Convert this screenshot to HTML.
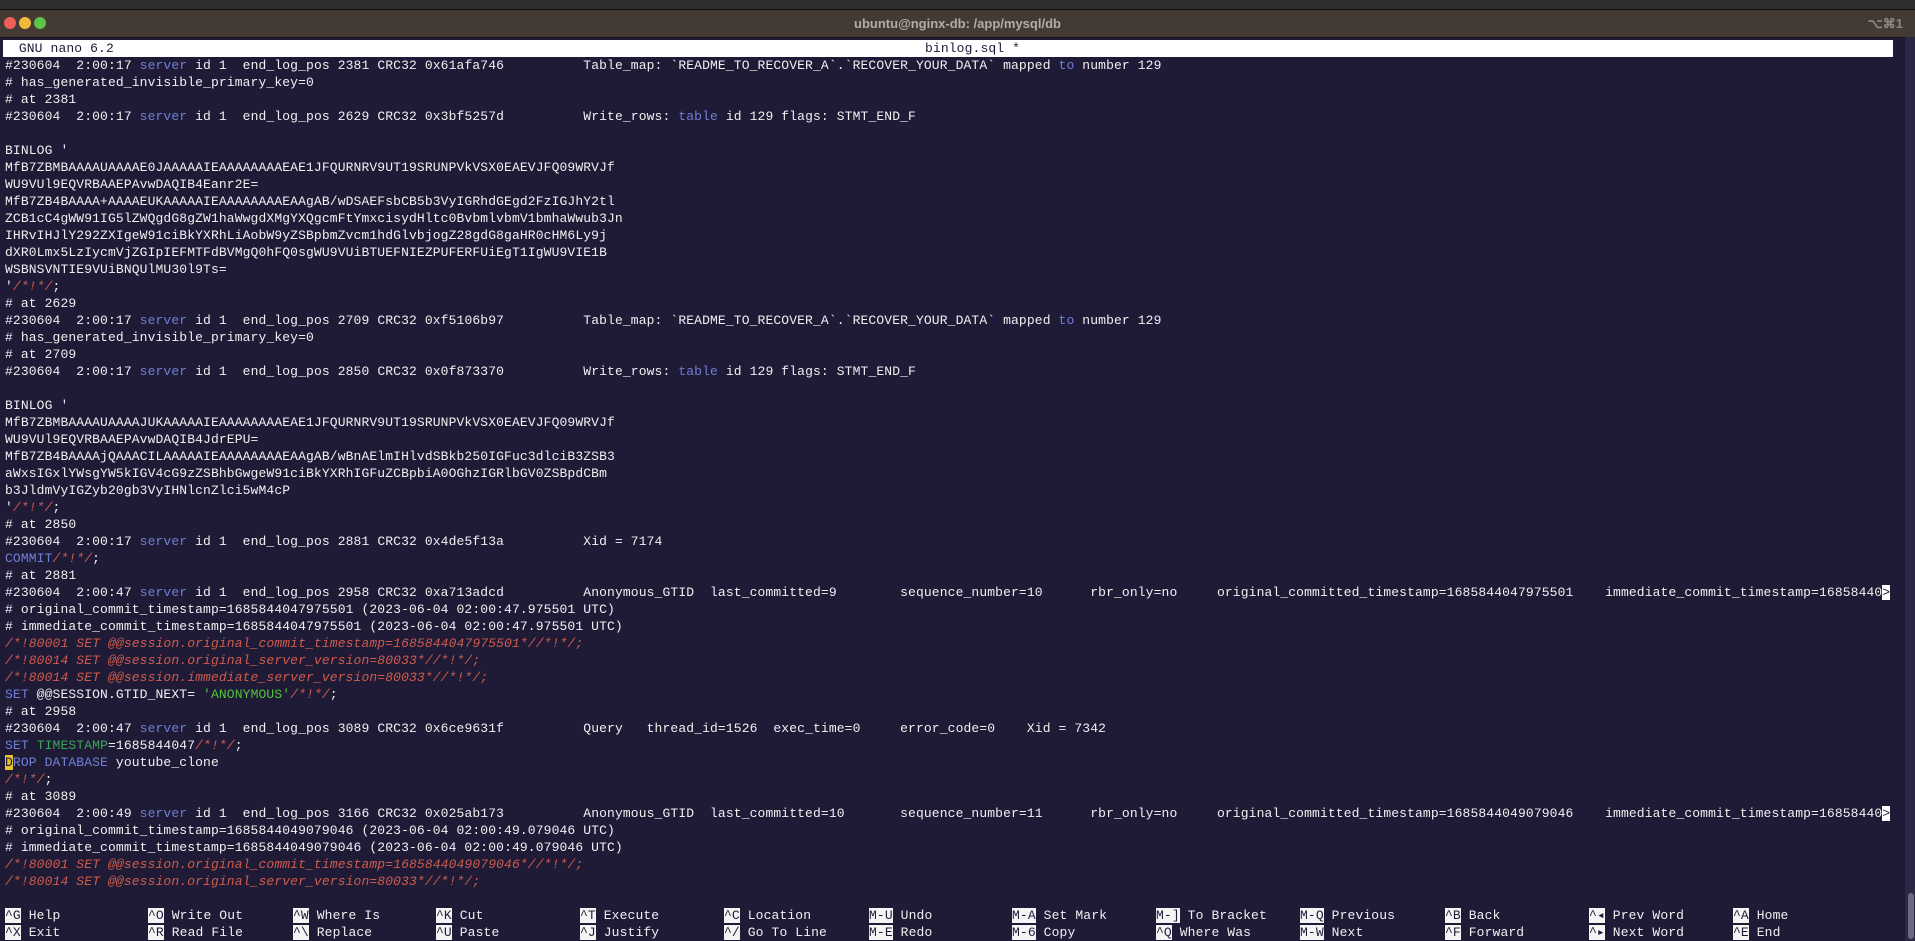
<!DOCTYPE html>
<html><head><meta charset="utf-8"><style>
html,body{margin:0;padding:0;width:1915px;height:941px;overflow:hidden;background:#1f1b37;}
.top{position:absolute;left:0;top:0;width:1915px;height:9px;background:#2e2e30;border-bottom:1px solid #111;}
.tb{position:absolute;left:0;top:10px;width:1915px;height:27px;background:#433a33;border-bottom:1px solid #1a1614;font-family:"Liberation Sans",sans-serif;font-weight:bold;color:#b3aca6;font-size:13px;}
.tb .t{position:absolute;left:0;width:1915px;text-align:center;top:6px;}
.tb .k{position:absolute;right:12px;top:6px;color:#8f8882;}
.dot{position:absolute;top:7px;width:12px;height:12px;border-radius:50%;}
.hdr{position:absolute;left:3px;top:40px;width:1890px;height:17px;background:#fff;}
.mono{font-family:"Liberation Mono",monospace;font-size:13px;letter-spacing:0.12px;line-height:17px;white-space:pre;}
pre{margin:0;position:absolute;left:5px;top:57px;color:#f0f0f0;}
.b{color:#6f7fd6}.r{color:#cf5b4b;font-style:italic}.g{color:#3aa655}.gg{color:#56c23c}
.cur{background:#e8c12c;color:#1f1b37}
.sc{position:absolute;color:#f0f0f0;}
.sc i{font-style:normal;background:#f4f4f4;color:#1f1b37;}
.sb{position:absolute;left:1905px;top:37px;width:10px;height:904px;background:#2a2643;}
.th{position:absolute;left:1908px;top:893px;width:6px;height:46px;background:#6b6880;border-radius:3px;}
</style></head><body>
<div class="top"></div>
<div class="tb"><div class="dot" style="left:4px;background:#ed5f57"></div><div class="dot" style="left:19px;background:#f0b93a"></div><div class="dot" style="left:34px;background:#5cc24a"></div><div class="t">ubuntu@nginx-db: /app/mysql/db</div><div class="k">⌥⌘1</div></div>
<div class="sb"></div><div class="th"></div>
<div class="hdr mono" style="color:#1f1b37">  GNU nano 6.2<span style="position:absolute;left:922px;top:0">binlog.sql *</span></div>
<pre class="mono">#230604  2:00:17 <span class="b">server</span> id 1  end_log_pos 2381 CRC32 0x61afa746          Table_map: `README_TO_RECOVER_A`.`RECOVER_YOUR_DATA` mapped <span class="b">to</span> number 129
# has_generated_invisible_primary_key=0
# at 2381
#230604  2:00:17 <span class="b">server</span> id 1  end_log_pos 2629 CRC32 0x3bf5257d          Write_rows: <span class="b">table</span> id 129 flags: STMT_END_F

BINLOG '
MfB7ZBMBAAAAUAAAAE0JAAAAAIEAAAAAAAAEAE1JFQURNRV9UT19SRUNPVkVSX0EAEVJFQ09WRVJf
WU9VUl9EQVRBAAEPAvwDAQIB4Eanr2E=
MfB7ZB4BAAAA+AAAAEUKAAAAAIEAAAAAAAAEAAgAB/wDSAEFsbCB5b3VyIGRhdGEgd2FzIGJhY2tl
ZCB1cC4gWW91IG5lZWQgdG8gZW1haWwgdXMgYXQgcmFtYmxcisydHltc0BvbmlvbmV1bmhaWwub3Jn
IHRvIHJlY292ZXIgeW91ciBkYXRhLiAobW9yZSBpbmZvcm1hdGlvbjogZ28gdG8gaHR0cHM6Ly9j
dXR0Lmx5LzIycmVjZGIpIEFMTFdBVMgQ0hFQ0sgWU9VUiBTUEFNIEZPUFERFUiEgT1IgWU9VIE1B
WSBNSVNTIE9VUiBNQUlMU30l9Ts=
'<span class="r">/*!*/</span>;
# at 2629
#230604  2:00:17 <span class="b">server</span> id 1  end_log_pos 2709 CRC32 0xf5106b97          Table_map: `README_TO_RECOVER_A`.`RECOVER_YOUR_DATA` mapped <span class="b">to</span> number 129
# has_generated_invisible_primary_key=0
# at 2709
#230604  2:00:17 <span class="b">server</span> id 1  end_log_pos 2850 CRC32 0x0f873370          Write_rows: <span class="b">table</span> id 129 flags: STMT_END_F

BINLOG '
MfB7ZBMBAAAAUAAAAJUKAAAAAIEAAAAAAAAEAE1JFQURNRV9UT19SRUNPVkVSX0EAEVJFQ09WRVJf
WU9VUl9EQVRBAAEPAvwDAQIB4JdrEPU=
MfB7ZB4BAAAAjQAAACILAAAAAIEAAAAAAAAEAAgAB/wBnAElmIHlvdSBkb250IGFuc3dlciB3ZSB3
aWxsIGxlYWsgYW5kIGV4cG9zZSBhbGwgeW91ciBkYXRhIGFuZCBpbiA0OGhzIGRlbGV0ZSBpdCBm
b3JldmVyIGZyb20gb3VyIHNlcnZlci5wM4cP
'<span class="r">/*!*/</span>;
# at 2850
#230604  2:00:17 <span class="b">server</span> id 1  end_log_pos 2881 CRC32 0x4de5f13a          Xid = 7174
<span class="b">COMMIT</span><span class="r">/*!*/</span>;
# at 2881
#230604  2:00:47 <span class="b">server</span> id 1  end_log_pos 2958 CRC32 0xa713adcd          Anonymous_GTID  last_committed=9        sequence_number=10      rbr_only=no     original_committed_timestamp=1685844047975501    immediate_commit_timestamp=16858440<span style="background:#fff;color:#1f1b37">&gt;</span>
# original_commit_timestamp=1685844047975501 (2023-06-04 02:00:47.975501 UTC)
# immediate_commit_timestamp=1685844047975501 (2023-06-04 02:00:47.975501 UTC)
<span class="r">/*!80001 SET @@session.original_commit_timestamp=1685844047975501*//*!*/;</span>
<span class="r">/*!80014 SET @@session.original_server_version=80033*//*!*/;</span>
<span class="r">/*!80014 SET @@session.immediate_server_version=80033*//*!*/;</span>
<span class="b">SET</span> @@SESSION.GTID_NEXT= <span class="gg">'ANONYMOUS'</span><span class="r">/*!*/</span>;
# at 2958
#230604  2:00:47 <span class="b">server</span> id 1  end_log_pos 3089 CRC32 0x6ce9631f          Query   thread_id=1526  exec_time=0     error_code=0    Xid = 7342
<span class="b">SET</span> <span class="g">TIMESTAMP</span>=1685844047<span class="r">/*!*/</span>;
<span class="cur">D</span><span class="b">ROP DATABASE</span> youtube_clone
<span class="r">/*!*/</span>;
# at 3089
#230604  2:00:49 <span class="b">server</span> id 1  end_log_pos 3166 CRC32 0x025ab173          Anonymous_GTID  last_committed=10       sequence_number=11      rbr_only=no     original_committed_timestamp=1685844049079046    immediate_commit_timestamp=16858440<span style="background:#fff;color:#1f1b37">&gt;</span>
# original_commit_timestamp=1685844049079046 (2023-06-04 02:00:49.079046 UTC)
# immediate_commit_timestamp=1685844049079046 (2023-06-04 02:00:49.079046 UTC)
<span class="r">/*!80001 SET @@session.original_commit_timestamp=1685844049079046*//*!*/;</span>
<span class="r">/*!80014 SET @@session.original_server_version=80033*//*!*/;</span></pre>
<div class="mono sc" style="left:5px;top:907px"><i>^G</i> Help
<i>^X</i> Exit</div>
<div class="mono sc" style="left:148px;top:907px"><i>^O</i> Write Out
<i>^R</i> Read File</div>
<div class="mono sc" style="left:293px;top:907px"><i>^W</i> Where Is
<i>^\</i> Replace</div>
<div class="mono sc" style="left:436px;top:907px"><i>^K</i> Cut
<i>^U</i> Paste</div>
<div class="mono sc" style="left:580px;top:907px"><i>^T</i> Execute
<i>^J</i> Justify</div>
<div class="mono sc" style="left:724px;top:907px"><i>^C</i> Location
<i>^/</i> Go To Line</div>
<div class="mono sc" style="left:869px;top:907px"><i>M-U</i> Undo
<i>M-E</i> Redo</div>
<div class="mono sc" style="left:1012px;top:907px"><i>M-A</i> Set Mark
<i>M-6</i> Copy</div>
<div class="mono sc" style="left:1156px;top:907px"><i>M-]</i> To Bracket
<i>^Q</i> Where Was</div>
<div class="mono sc" style="left:1300px;top:907px"><i>M-Q</i> Previous
<i>M-W</i> Next</div>
<div class="mono sc" style="left:1445px;top:907px"><i>^B</i> Back
<i>^F</i> Forward</div>
<div class="mono sc" style="left:1589px;top:907px"><i>^◂</i> Prev Word
<i>^▸</i> Next Word</div>
<div class="mono sc" style="left:1733px;top:907px"><i>^A</i> Home
<i>^E</i> End</div>
</body></html>
